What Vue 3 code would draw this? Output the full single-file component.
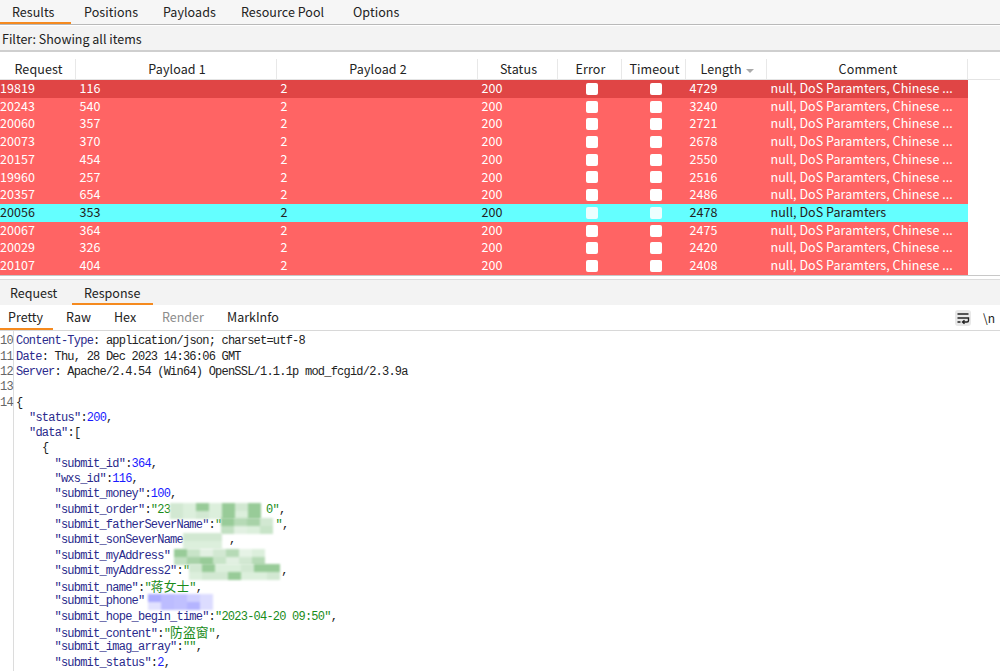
<script setup>
const rows = [
  ['19819', '116', '4729', 'dark'],
  ['20243', '540', '3240', ''],
  ['20060', '357', '2721', ''],
  ['20073', '370', '2678', ''],
  ['20157', '454', '2550', ''],
  ['19960', '257', '2516', ''],
  ['20357', '654', '2486', ''],
  ['20056', '353', '2478', 'sel'],
  ['20067', '364', '2475', ''],
  ['20029', '326', '2420', ''],
  ['20107', '404', '2408', '']
]
const green = ['#dcefdc', '#c2e0c2', '#a8d2a8', '#d2e8d2', '#b6dab6', '#e6f3e6', '#98cb98', '#c8e4c8', '#e2f0e2']
const blue = ['#dcdcff', '#bcbcff', '#d0d0ff', '#acacff', '#c6c6ff', '#b4b4ff', '#e2e2ff', '#c0c0ff']
const cells = (w, palette, seed, rowsN = 2) =>
  Array.from({ length: Math.ceil(w / 13) * rowsN }, (_, i) => palette[(i * 5 + seed * 3 + (i % 3) * seed) % palette.length])
</script>

<template>
  <div class="page">
    <nav class="tabs top">
      <span class="tab on">Results</span>
      <span class="tab">Positions</span>
      <span class="tab">Payloads</span>
      <span class="tab">Resource Pool</span>
      <span class="tab">Options</span>
    </nav>
    <div class="filter">Filter: Showing all items</div>
    <section class="table">
      <div class="row head">
        <span>Request</span><span>Payload 1</span><span>Payload 2</span><span>Status</span><span>Error</span><span>Timeout</span>
        <span>Length <i class="sort"></i></span><span>Comment</span>
      </div>
      <div v-for="r in rows" :key="r[0]" class="row" :class="r[3]">
        <span>{{ r[0] }}</span><span class="pad">{{ r[1] }}</span><span class="pad">2</span><span class="pad">200</span>
        <span class="chk"><b></b></span><span class="chk"><b></b></span>
        <span class="pad">{{ r[2] }}</span>
        <span class="pad">{{ r[3] === 'sel' ? 'null, DoS Paramters' : 'null, DoS Paramters, Chinese ...' }}</span>
      </div>
    </section>
    <nav class="tabs lower">
      <span class="tab">Request</span>
      <span class="tab on">Response</span>
    </nav>
    <nav class="tabs sub">
      <span class="tab on">Pretty</span>
      <span class="tab">Raw</span>
      <span class="tab">Hex</span>
      <span class="tab off">Render</span>
      <span class="tab">MarkInfo</span>
      <span class="tools">
        <span class="wrap">
          <svg width="16" height="16" viewBox="0 0 16 16" fill="none" stroke="#222" stroke-width="1.4">
            <path d="M2.5 4h11M2.5 8h11v2.5a1.5 1.5 0 0 1-1.5 1.5H8M2.5 12h3M9.5 10.2 7.5 12l2 1.8" />
          </svg>
        </span>
        <span class="nl">\n</span>
      </span>
    </nav>
    <section class="code">
      <div class="gutter">
        <div v-for="n in [10, 11, 12, 13, 14]" :key="n" class="ln">{{ n }}</div>
      </div>
      <div class="lines">
        <div class="ln"><span class="h">Content-Type</span>: application/json; charset=utf-8</div>
        <div class="ln"><span class="h">Date</span>: Thu, 28 Dec 2023 14:36:06 GMT</div>
        <div class="ln"><span class="h">Server</span>: Apache/2.4.54 (Win64) OpenSSL/1.1.1p mod_fcgid/2.3.9a</div>
        <div class="ln"></div>
        <div class="ln">{</div>
        <div class="ln i1"><span class="k">"status"</span>:<span class="n">200</span>,</div>
        <div class="ln i1"><span class="k">"data"</span>:[</div>
        <div class="ln i2">{</div>
        <div class="ln i3"><span class="k">"submit_id"</span>:<span class="n">364</span>,</div>
        <div class="ln i3"><span class="k">"wxs_id"</span>:<span class="n">116</span>,</div>
        <div class="ln i3"><span class="k">"submit_money"</span>:<span class="n">100</span>,</div>
        <div class="ln i3"><span class="k">"submit_order"</span>:<span class="s">"23</span><span class="mosaic" style="width:96px"><i v-for="(c, i) in cells(96, green, 1)" :key="i" :style="{ background: c }"></i></span><span class="s">0"</span>,</div>
        <div class="ln i3"><span class="k">"submit_fatherSeverName"</span>:<span class="s">"</span><span class="mosaic" style="width:54px"><i v-for="(c, i) in cells(54, green, 2)" :key="i" :style="{ background: c }"></i></span><span class="s">"</span>,</div>
        <div class="ln i3"><span class="k">"submit_sonSeverName</span><span class="mosaic" style="width:46px"><i v-for="(c, i) in cells(46, green, 4)" :key="i" :style="{ background: c }"></i></span>,</div>
        <div class="ln i3"><span class="k">"submit_myAddress"</span><span class="mosaic indent" style="width:92px"><i v-for="(c, i) in cells(92, green, 5)" :key="i" :style="{ background: c }"></i></span></div>
        <div class="ln i3"><span class="k">"submit_myAddress2"</span>:<span class="s">"</span><span class="mosaic" style="width:92px"><i v-for="(c, i) in cells(92, green, 7)" :key="i" :style="{ background: c }"></i></span>,</div>
        <div class="ln i3"><span class="k">"submit_name"</span>:<span class="s">"<span class="cjk">蒋女士</span>"</span>,</div>
        <div class="ln i3"><span class="k">"submit_phone"</span><span class="mosaic indent" style="width:76px"><i v-for="(c, i) in cells(76, blue, 1)" :key="i" :style="{ background: c }"></i></span></div>
        <div class="ln i3"><span class="k">"submit_hope_begin_time"</span>:<span class="s">"2023-04-20 09:50"</span>,</div>
        <div class="ln i3"><span class="k">"submit_content"</span>:<span class="s">"<span class="cjk">防盗窗</span>"</span>,</div>
        <div class="ln i3"><span class="k">"submit_imag_array"</span>:<span class="s">""</span>,</div>
        <div class="ln i3"><span class="k">"submit_status"</span>:<span class="n">2</span>,</div>
      </div>
    </section>
  </div>
</template>

<style>
html, body { margin: 0; background: #fff; overflow: hidden; }
</style>

<style scoped>
.page { width: 1000px; height: 671px; overflow: hidden; background: #fff; color: #222; font: 12.5px "Noto Sans CJK SC", "Noto Sans", sans-serif; display: flex; flex-direction: column; }
.tabs { display: flex; box-sizing: border-box; }
.tab { box-sizing: border-box; display: flex; align-items: center; border-bottom: 2px solid transparent; white-space: nowrap; }
.tab.on { border-bottom-color: #f58a1f; }
.top { height: 25px; padding-top: 2px; background: #f6f6f6; border-bottom: 1px solid #b9b9b9; }
.top .tab { height: 22px; padding-bottom: 2px; letter-spacing: .05px; }
.top .tab:nth-child(1) { width: 71px; padding-left: 12px; }
.top .tab:nth-child(2) { width: 79px; padding-left: 13px; }
.top .tab:nth-child(3) { width: 78px; padding-left: 13px; }
.top .tab:nth-child(4) { width: 112px; padding-left: 13px; }
.top .tab:nth-child(5) { width: 82px; padding-left: 13px; }
.filter { height: 24px; margin-top: 1px; padding-left: 2px; display: flex; align-items: center; background: #f3f3f3; border-bottom: 2px solid #cfcfcf; }
.table { margin-top: 7px; height: 217px; border-bottom: 1px solid #c8c8c8; box-sizing: border-box; }
.row { display: grid; grid-template-columns: 76px 201px 201px 80px 64px 64px 81px 201px; width: 968px; height: 17.72px; line-height: 16px; background: #ff6464; color: #fff; white-space: nowrap; letter-spacing: .06px; }
.row.dark { background: #e04545; }
.row.sel { background: #64ffff; color: #222; }
.row.sel .chk b { background: #ecffff; }
.head { width: 1000px; height: 21px; line-height: 20px; background: #fff; color: #222; text-align: center; border-bottom: 1px solid #e4e4e4; box-sizing: border-box; grid-template-columns: 76px 201px 201px 80px 64px 64px 81px 201px 32px; letter-spacing: .12px; }
.head span { border-right: 1px solid #e8e8e8; padding-left: 2px; box-sizing: border-box; }
.sort { display: inline-block; width: 0; height: 0; border: 4px solid transparent; border-top: 4px solid #aaa; border-bottom: 0; vertical-align: middle; margin-left: 1px; }
.pad { padding-left: 3.5px; }
.chk { display: flex; align-items: center; justify-content: center; padding-left: 3px; }
.chk b { width: 12px; height: 12px; border-radius: 2px; background: #fff; }
.lower { height: 26px; margin-top: 3px; background: #f3f3f3; border-top: 1px solid #dcdcdc; }
.lower .tab { height: 25px; padding-top: 1px; width: 72px; padding-left: 10px; }
.lower .tab.on { width: 81px; padding-left: 12px; }
.sub { height: 26px; border-bottom: 1px solid #d8d8d8; }
.sub .tab { height: 25px; }
.sub .tab:nth-child(1) { width: 53px; padding-left: 8px; }
.sub .tab:nth-child(2) { width: 48px; padding-left: 13px; }
.sub .tab:nth-child(3) { width: 48px; padding-left: 13px; }
.sub .tab:nth-child(4) { width: 65px; padding-left: 13px; }
.sub .tab:nth-child(5) { width: 90px; padding-left: 13px; }
.off { color: #8c8c8c; }
.tools { margin-left: auto; display: flex; align-items: center; gap: 12px; padding-right: 5px; }
.wrap { width: 16px; height: 16px; background: #e8e8e8; border-radius: 3px; display: flex; }
.nl { color: #222; font-size: 12px; }
.code { display: flex; flex: 1; min-height: 0; padding-top: 3.4px; font: 12px "Liberation Mono", "Noto Sans CJK SC", monospace; letter-spacing: -0.78px; color: #222; overflow: hidden; }
.gutter { width: 13px; flex: none; border-right: 1px solid #dcdcdc; text-align: right; color: #666; margin-top: -3.4px; padding-top: 3.4px; }
.gutter .ln { padding-right: 1px; }
.lines { padding-left: 2px; }
.ln { height: 15.3px; line-height: 15.3px; white-space: pre; }
.i1 { padding-left: 13px; }
.i2 { padding-left: 26px; }
.i3 { padding-left: 38.5px; }
.h, .k { color: #2a2a8c; }
.n { color: #1a1aff; }
.s { color: #1a8c1a; }
.cjk { display: inline-block; height: 13px; font: 12.8px/13px "Noto Sans CJK SC", sans-serif; letter-spacing: 0; }
.mosaic { display: inline-flex; flex-wrap: wrap; vertical-align: top; height: 16px; overflow: hidden; filter: blur(1.2px); }
.mosaic.indent { margin-left: 4px; }
.mosaic i { width: 13px; height: 8px; }
</style>
